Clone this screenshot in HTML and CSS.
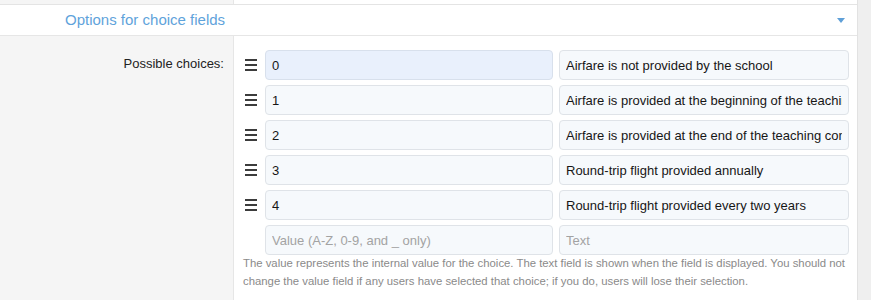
FILE: index.html
```html
<!DOCTYPE html>
<html lang="en">
<head>
<meta charset="utf-8">
<title>Options for choice fields</title>
<link rel="stylesheet" href="styles.css">
</head>
<body>
<div class="page">
  <div class="prev-row">
    <div class="prev-label"></div>
    <div class="prev-field"></div>
  </div>
  <div class="section-header">
    <span class="section-title">Options for choice fields</span>
    <span class="caret"></span>
  </div>
  <div class="form-row">
    <div class="form-label">Possible choices:</div>
    <div class="form-field">
      <div class="choice-list">
        <div class="choice">
          <span class="handle"><i></i><i></i><i></i></span>
          <input class="inp inp-value inp-focus" type="text" value="0">
          <input class="inp inp-text" type="text" value="Airfare is not provided by the school">
        </div>
        <div class="choice">
          <span class="handle"><i></i><i></i><i></i></span>
          <input class="inp inp-value" type="text" value="1">
          <input class="inp inp-text" type="text" value="Airfare is provided at the beginning of the teaching contract">
        </div>
        <div class="choice">
          <span class="handle"><i></i><i></i><i></i></span>
          <input class="inp inp-value" type="text" value="2">
          <input class="inp inp-text" type="text" value="Airfare is provided at the end of the teaching contract">
        </div>
        <div class="choice">
          <span class="handle"><i></i><i></i><i></i></span>
          <input class="inp inp-value" type="text" value="3">
          <input class="inp inp-text" type="text" value="Round-trip flight provided annually">
        </div>
        <div class="choice">
          <span class="handle"><i></i><i></i><i></i></span>
          <input class="inp inp-value" type="text" value="4">
          <input class="inp inp-text" type="text" value="Round-trip flight provided every two years">
        </div>
        <div class="choice">
          <span class="handle handle-empty"></span>
          <input class="inp inp-value" type="text" placeholder="Value (A-Z, 0-9, and _ only)">
          <input class="inp inp-text" type="text" placeholder="Text">
        </div>
      </div>
      <p class="explain">The value represents the internal value for the choice. The text field is shown when the field is displayed. You should not change the value field if any users have selected that choice; if you do, users will lose their selection.</p>
    </div>
  </div>
</div>
</body>
</html>
```

FILE: styles.css
```css
html, body {
  margin: 0;
  padding: 0;
}
body {
  background: #efefef;
  font-family: "Liberation Sans", Arial, sans-serif;
  color: #1d1d1d;
  overflow: hidden;
}
.page {
  width: 857px;
  background: #ffffff;
  border-right: 1px solid #e2e2e2;
  min-height: 300px;
}
.prev-row {
  display: flex;
  height: 4px;
  border-bottom: 1px solid #e4e4e4;
}
.prev-label {
  width: 233px;
  background: #f5f5f5;
  border-right: 1px solid #e6e6e6;
}
.prev-field {
  flex: 1;
}
.section-header {
  display: flex;
  align-items: center;
  justify-content: space-between;
  height: 30px;
  padding: 0 12px 0 65px;
  border-bottom: 1px solid #e6e6e6;
}
.section-title {
  font-size: 15px;
  color: #5fa3db;
  line-height: 30px;
}
.caret {
  width: 0;
  height: 0;
  border-left: 4px solid transparent;
  border-right: 4px solid transparent;
  border-top: 5px solid #5fa0d8;
  margin-top: 1px;
}
.form-row {
  display: flex;
  min-height: 264px;
}
.form-label {
  width: 224px;
  padding-right: 9px;
  padding-top: 20px;
  background: #f5f5f5;
  border-right: 1px solid #e6e6e6;
  text-align: right;
  font-size: 13px;
  color: #222222;
  line-height: 16px;
}
.form-field {
  flex: 1;
  padding: 14px 6px 0 9px;
}
.choice-list {
  display: flex;
  flex-direction: column;
  gap: 5px;
}
.choice {
  display: flex;
  align-items: center;
}
.handle {
  display: flex;
  flex-direction: column;
  justify-content: center;
  gap: 3px;
  width: 12px;
  margin-left: 2px;
  margin-right: 8px;
}
.handle i {
  display: block;
  height: 2px;
  background: #3c3c3c;
}
.handle-empty {
  height: 12px;
}
.inp {
  box-sizing: border-box;
  height: 30px;
  border: 1px solid #dfe3e8;
  border-radius: 4px;
  background: #f6f9fc;
  font-family: "Liberation Sans", Arial, sans-serif;
  font-size: 13px;
  color: #161616;
  padding: 0 6px;
  margin: 0;
  outline: none;
}
.inp::placeholder {
  color: #a3a3a3;
}
.inp-value {
  width: 288px;
}
.inp-text {
  width: 290px;
  margin-left: 6px;
}
.inp-focus {
  background: #e9f0fc;
  border-color: #d8e0ec;
}
.explain {
  margin: -1px 0 0 0;
  font-size: 11.35px;
  line-height: 18px;
  color: #8a8a8a;
}
```
